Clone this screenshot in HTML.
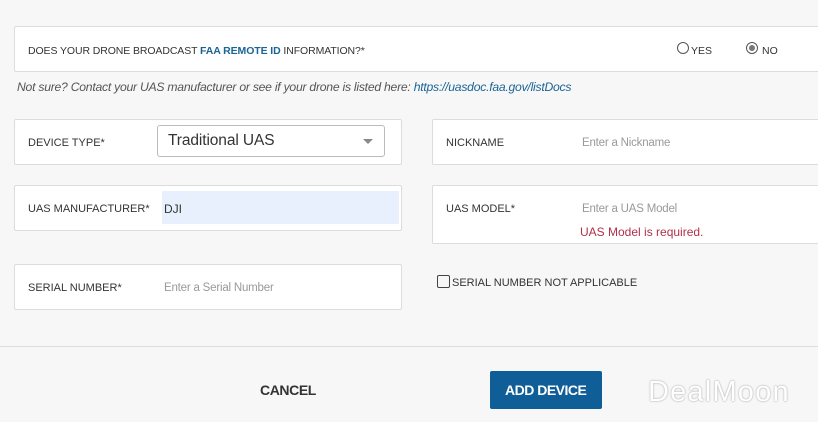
<!DOCTYPE html>
<html><head><meta charset="utf-8"><style>
body{margin:0;width:818px;height:422px;background:#f7f7f7;font-family:"Liberation Sans",sans-serif;position:relative;overflow:hidden;color:#333}
.b{position:absolute;background:#fff;border:1px solid #dcdcdc;border-radius:2px;box-sizing:border-box}
.t{position:absolute;white-space:nowrap;font-size:11px;letter-spacing:0;color:#333}
.ph{color:#999;font-size:11.5px;letter-spacing:-0.2px}
</style></head><body>
<div class="b" style="left:14px;top:26px;width:820px;height:46px"></div>
<div class="t" style="left:28px;top:45px;font-size:10.5px;letter-spacing:-0.1px">DOES YOUR DRONE BROADCAST <b style="color:#1a6496">FAA REMOTE ID</b> INFORMATION?*</div>
<div style="position:absolute;left:677px;top:42px;width:10px;height:10px;border:1px solid #555;border-radius:50%"></div>
<div class="t" style="left:691px;top:45px;font-size:10.5px">YES</div>
<div style="position:absolute;left:746px;top:42px;width:10px;height:10px;border:1px solid #555;border-radius:50%;box-sizing:content-box"><div style="position:absolute;left:2px;top:2px;width:6px;height:6px;border-radius:50%;background:#777"></div></div>
<div class="t" style="left:762px;top:45px;font-size:10.5px">NO</div>
<div class="t" style="left:17px;top:80px;font-size:12.2px;font-style:italic;color:#555;letter-spacing:-0.25px">Not sure? Contact your UAS manufacturer or see if your drone is listed here: <span style="color:#1a6496">https://uasdoc.faa.gov/listDocs</span></div>

<div class="b" style="left:14px;top:119px;width:388px;height:46px"></div>
<div class="t" style="left:28px;top:137px">DEVICE TYPE*</div>
<div class="b" style="left:157px;top:125px;width:228px;height:32px;border-color:#bbb;border-radius:3px"></div>
<div class="t" style="left:168px;top:132px;font-size:15.5px;letter-spacing:-0.1px">Traditional UAS</div>
<div style="position:absolute;left:363px;top:139px;border-left:5px solid transparent;border-right:5px solid transparent;border-top:5px solid #888"></div>

<div class="b" style="left:432px;top:119px;width:400px;height:46px"></div>
<div class="t" style="left:446px;top:137px">NICKNAME</div>
<div class="t ph" style="left:582px;top:137px">Enter a Nickname</div>

<div class="b" style="left:14px;top:185px;width:388px;height:46px"></div>
<div class="t" style="left:28px;top:203px">UAS MANUFACTURER*</div>
<div style="position:absolute;left:162px;top:191px;width:237px;height:33px;background:#e8f0fe"></div>
<div class="t" style="left:164px;top:202px;font-size:12px">DJI</div>

<div class="b" style="left:432px;top:185px;width:400px;height:59px"></div>
<div class="t" style="left:446px;top:203px">UAS MODEL*</div>
<div class="t ph" style="left:582px;top:203px">Enter a UAS Model</div>
<div class="t" style="left:580px;top:225px;font-size:12px;color:#b0304a;letter-spacing:0">UAS Model is required.</div>

<div class="b" style="left:14px;top:264px;width:388px;height:46px"></div>
<div class="t" style="left:28px;top:282px">SERIAL NUMBER*</div>
<div class="t ph" style="left:164px;top:282px">Enter a Serial Number</div>

<div style="position:absolute;left:437px;top:275px;width:11px;height:11px;border:1px solid #444;border-radius:2px"></div>
<div class="t" style="left:452px;top:277px;letter-spacing:0">SERIAL NUMBER NOT APPLICABLE</div>

<div style="position:absolute;left:0;top:346px;width:818px;height:1px;background:#ddd"></div>
<div class="t" style="left:260px;top:382px;font-size:14px;font-weight:bold;color:#333;letter-spacing:-0.4px">CANCEL</div>
<div style="position:absolute;left:490px;top:371px;width:112px;height:38px;background:#0f5e98;border-radius:2px"></div>
<div class="t" style="left:505px;top:382px;font-size:14px;font-weight:bold;color:#fff;letter-spacing:-0.5px">ADD DEVICE</div>
<div class="t" style="left:648px;top:376px;font-size:29px;color:#fff;letter-spacing:1.2px;text-shadow:0 0 2px #bbb,0 0 1px #999">DealMoon</div>
</body></html>
